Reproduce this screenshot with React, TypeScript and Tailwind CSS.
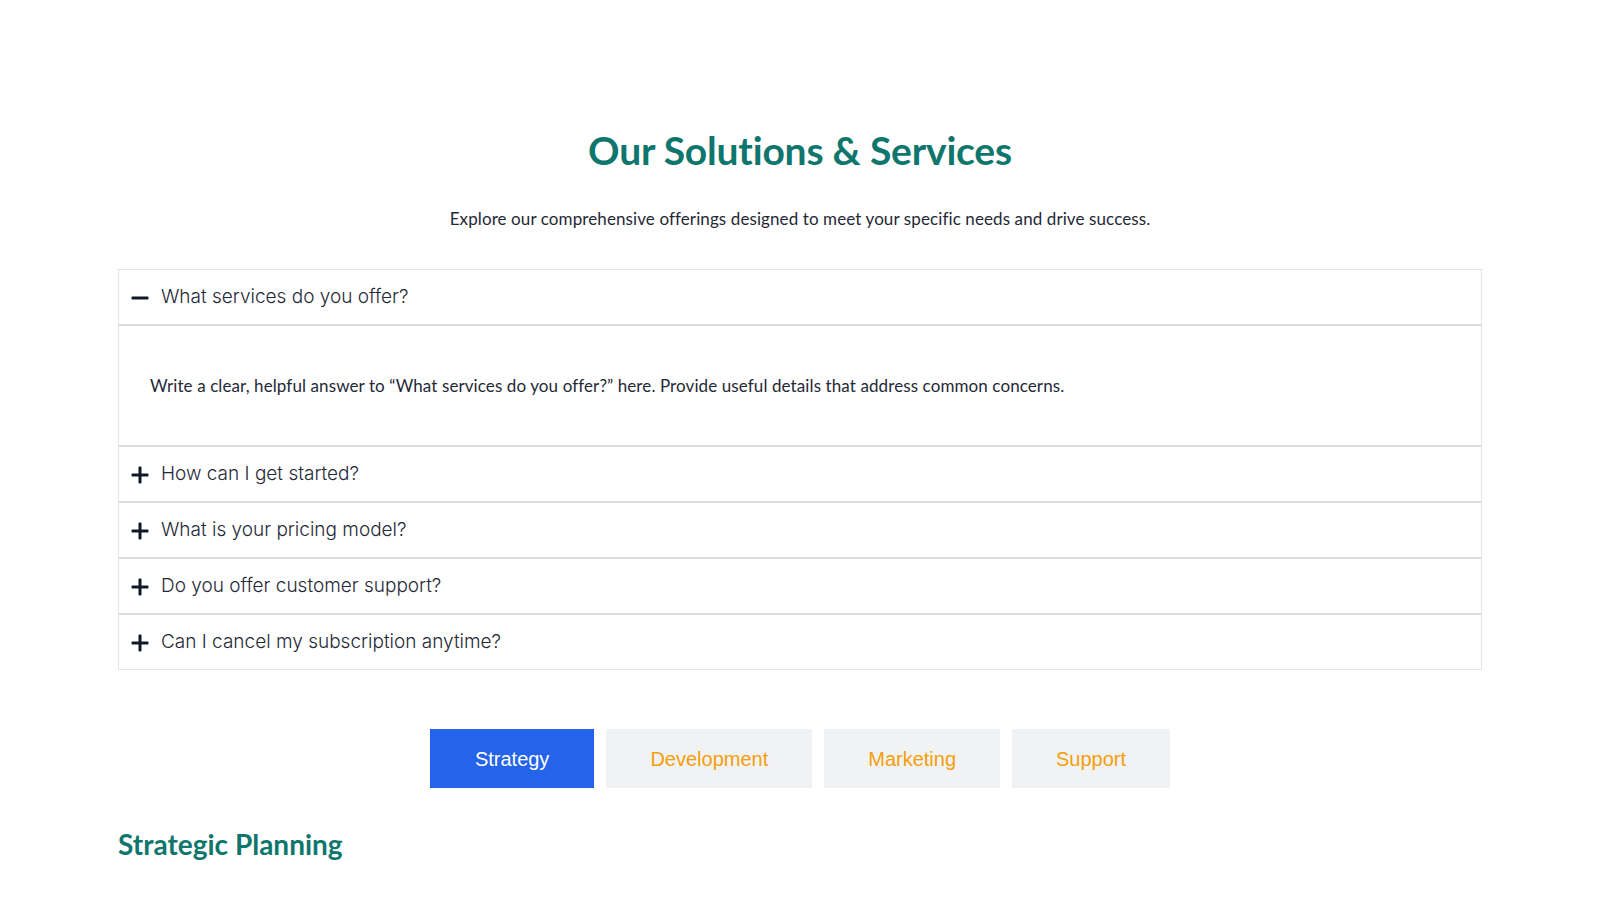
import React, { useState } from "react";

const faqs = [
  "What services do you offer?",
  "How can I get started?",
  "What is your pricing model?",
  "Do you offer customer support?",
  "Can I cancel my subscription anytime?",
];

const tabs = ["Strategy", "Development", "Marketing", "Support"];

function Minus() {
  return (
    <svg width="18" height="18" viewBox="0 0 18 18" className="shrink-0">
      <rect x="0.5" y="7.5" width="17" height="3" rx="1" fill="#111827" />
    </svg>
  );
}

function Plus() {
  return (
    <svg width="18" height="18" viewBox="0 0 18 18" className="shrink-0">
      <rect x="0.5" y="7.5" width="17" height="3" rx="1" fill="#111827" />
      <rect x="7.5" y="0.5" width="3" height="17" rx="1" fill="#111827" />
    </svg>
  );
}

export default function App() {
  const [open, setOpen] = useState(0);
  const [tab, setTab] = useState(0);
  return (
    <div className="min-h-[900px] bg-white" style={{ fontFamily: "Lato, 'Open Sans', sans-serif" }}>
      <div className="w-full px-[118px] pt-[127px]">
        <h2 className="text-center text-[39px] leading-[46px] font-bold text-[#0f766e] tracking-[-0.2px]">
          Our Solutions &amp; Services
        </h2>
        <p className="mt-[34px] text-center text-[17px] leading-[24px] tracking-[0.1px] text-[#1f2937]">
          Explore our comprehensive offerings designed to meet your specific needs and drive success.
        </p>

        <div className="mt-[38px] border border-[#e3e4e8]">
          {faqs.map((q, i) => (
            <div key={q} className={i < faqs.length - 1 ? "border-b-2 border-[#d9dbe0]" : ""}>
              <button
                onClick={() => setOpen(open === i ? -1 : i)}
                className="flex h-[54px] w-full items-center gap-[12px] px-[12px] pt-[1px] text-left"
              >
                {open === i ? <Minus /> : <Plus />}
                <span
                  className="text-[19px] font-light text-[#1f2937]"
                  style={{ fontFamily: "Inter, 'Open Sans', sans-serif" }}
                >
                  {q}
                </span>
              </button>
              {open === i && (
                <div className="flex h-[121px] items-center border-t-2 border-[#d9dbe0] px-[31px] text-[17px] tracking-[0.1px] text-[#1f2937]">
                  Write a clear, helpful answer to “{q}” here. Provide useful details that address common concerns.
                </div>
              )}
            </div>
          ))}
        </div>

        <div className="mt-[59px] flex justify-center gap-[12px]" style={{ fontFamily: "'Liberation Sans', Arial, sans-serif" }}>
          {tabs.map((t, i) => (
            <button
              key={t}
              onClick={() => setTab(i)}
              className={
                i === tab
                  ? "h-[59px] px-[45px] text-[20px] bg-[#2563eb] text-white"
                  : "h-[59px] px-[44px] text-[20px] bg-[#f1f2f4] text-[#f59e0b]"
              }
            >
              {t}
            </button>
          ))}
        </div>

        <h3 className="mt-[39px] text-[28px] leading-[34px] font-bold text-[#0f766e]">
          Strategic Planning
        </h3>
      </div>
    </div>
  );
}
